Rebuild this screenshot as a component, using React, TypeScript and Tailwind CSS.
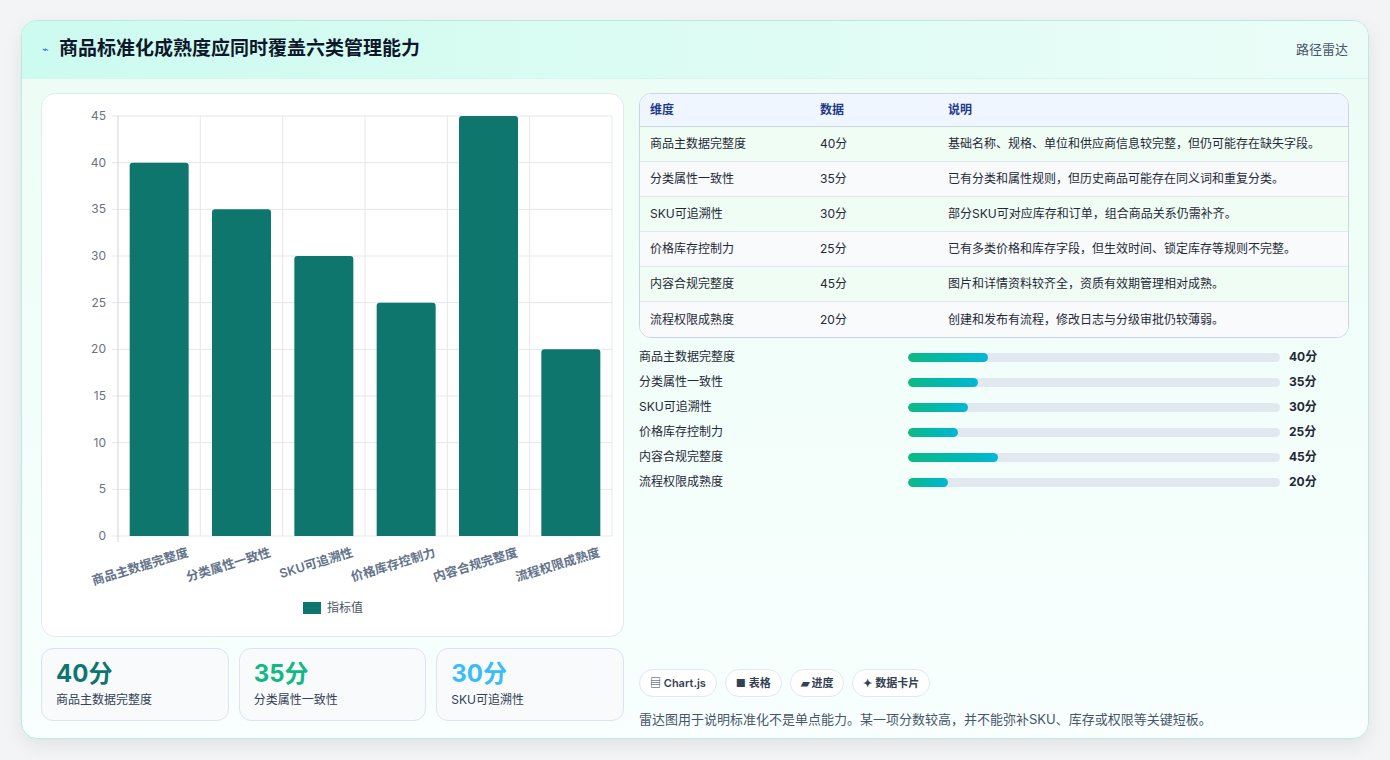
import React from "react";

const data = [
  { n: "商品主数据完整度", v: 40, d: "基础名称、规格、单位和供应商信息较完整，但仍可能存在缺失字段。" },
  { n: "分类属性一致性", v: 35, d: "已有分类和属性规则，但历史商品可能存在同义词和重复分类。" },
  { n: "SKU可追溯性", v: 30, d: "部分SKU可对应库存和订单，组合商品关系仍需补齐。" },
  { n: "价格库存控制力", v: 25, d: "已有多类价格和库存字段，但生效时间、锁定库存等规则不完整。" },
  { n: "内容合规完整度", v: 45, d: "图片和详情资料较齐全，资质有效期管理相对成熟。" },
  { n: "流程权限成熟度", v: 20, d: "创建和发布有流程，修改日志与分级审批仍较薄弱。" },
];

function Chart() {
  const x0 = 76, x1 = 570, y0 = 22, y1 = 442;
  const cw = (x1 - x0) / 6;
  const ys = [0, 5, 10, 15, 20, 25, 30, 35, 40, 45];
  const yp = (v: number) => y1 - (v / 45) * (y1 - y0);
  return (
    <svg width="582" height="543" className="block">
      {ys.map((v) => (
        <g key={v}>
          <line x1={x0 - 6} x2={x1} y1={yp(v)} y2={yp(v)} stroke="#e5e7eb" />
          <text x={x0 - 12} y={yp(v) + 4} textAnchor="end" fontSize="12" fill="#6b7280">{v}</text>
        </g>
      ))}
      {data.map((_, i) => (
        <line key={i} x1={x0 + cw * (i + 1)} x2={x0 + cw * (i + 1)} y1={y0} y2={y1} stroke="#e5e7eb" />
      ))}
      <line x1={x0} x2={x0} y1={y0} y2={y1 + 6} stroke="#d1d5db" />
      {data.map((d, i) => {
        const cx = x0 + cw * i + cw / 2;
        return (
          <g key={d.n}>
            <path d={`M${cx - 29.5} ${y1} V${yp(d.v) + 3} q0 -3 3 -3 H${cx + 26.5} q3 0 3 3 V${y1} Z`} fill="#0f766e" />
            <text x={cx + 30} y={y1 + 20} textAnchor="end" fontSize="12.5" fontWeight="600" fill="#64748b" transform={`rotate(-17 ${cx + 30} ${y1 + 20})`}>{d.n}</text>
          </g>
        );
      })}
      <rect x="261" y="508" width="18" height="12" fill="#0f766e" />
      <text x="285" y="518" fontSize="12" fill="#4b5563">指标值</text>
    </svg>
  );
}

export default function App() {
  return (
    <div className="w-[1390px] h-[760px] bg-[#f3f4f6] p-[20px] pl-[21px]" style={{ fontFamily: "Inter, 'Noto Sans CJK SC', sans-serif" }}>
      <div className="w-[1348px] h-[719px] rounded-[16px] border border-[#b8ece2] bg-gradient-to-b from-[#ecfdf5] to-[#f8fffe] shadow-[0_6px_18px_rgba(0,0,0,0.08)] overflow-hidden flex flex-col">
        <div className="h-[58px] flex items-center justify-between px-[20px] bg-gradient-to-r from-[#ccfbef] to-[#ecfdf8] border-b border-[#d6f5ec]">
          <div className="flex items-center gap-[10px]">
            <span className="text-[#2563eb] text-[11px]">⌁</span>
            <span className="text-[19px] font-bold text-[#0f172a]">商品标准化成熟度应同时覆盖六类管理能力</span>
          </div>
          <span className="text-[13px] text-[#475569]">路径雷达</span>
        </div>
        <div className="flex gap-[15px] px-[19px] pt-[14px]">
          <div className="w-[583px] flex flex-col gap-[11px]">
            <div className="h-[544px] rounded-[14px] border border-[#e2e8f0] bg-white overflow-hidden">
              <Chart />
            </div>
            <div className="flex gap-[10px]">
              {[["40分", "text-[#0f766e]"], ["35分", "text-[#10b981]"], ["30分", "text-[#38bdf8]"]].map(([v, c], i) => (
                <div key={v} className="w-[188px] h-[73px] rounded-[12px] border border-[#dbe4f0] bg-[#f8fafc] px-[14px] pt-[10px]">
                  <div className={`text-[24px] font-bold leading-[30px] ${c}`}>{v}</div>
                  <div className="text-[12px] text-[#334155] mt-[2px]">{data[i].n}</div>
                </div>
              ))}
            </div>
          </div>
          <div className="flex-1 flex flex-col">
            <div className="rounded-[12px] border border-[#cbd5e1] overflow-hidden bg-white">
              <div className="h-[33px] flex items-center bg-[#eff6ff] border-b border-[#cbd5e1] text-[12px] font-semibold text-[#1e3a8a] px-[10px]">
                <div className="w-[170px]">维度</div><div className="w-[128px]">数据</div><div>说明</div>
              </div>
              {data.map((d, i) => (
                <div key={d.n} className={`h-[35px] flex items-center px-[10px] text-[12px] text-[#1f2937] ${i % 2 === 0 ? "bg-[#f0fdf4]" : "bg-[#f8fafc]"} ${i < 5 ? "border-b border-[#e2e8f0]" : ""}`}>
                  <div className="w-[170px]">{d.n}</div><div className="w-[128px]">{d.v}分</div><div>{d.d}</div>
                </div>
              ))}
            </div>
            <div className="flex flex-col gap-[11px] mt-[12px]">
              {data.map((d) => (
                <div key={d.n} className="h-[14px] flex items-center text-[12px]">
                  <div className="w-[269px] text-[#1f2937]">{d.n}</div>
                  <div className="w-[372px] h-[9px] rounded-full bg-[#e2e8f0] overflow-hidden">
                    <div className="h-full rounded-full bg-gradient-to-r from-[#10b981] to-[#06b6d4]" style={{ width: `${(d.v / 185) * 100}%` }} />
                  </div>
                  <div className="ml-[9px] font-bold text-[#1f2937]">{d.v}分</div>
                </div>
              ))}
            </div>
            <div className="flex gap-[8px] mt-[180px]">
              {["▤ Chart.js", "■ 表格", "▰ 进度", "✦ 数据卡片"].map((t) => (
                <span key={t} className="h-[28px] px-[10px] flex items-center rounded-full border border-[#e2e8f0] bg-white text-[11px] font-semibold text-[#334155]">{t}</span>
              ))}
            </div>
            <div className="mt-[13px] text-[13px] text-[#475569]">雷达图用于说明标准化不是单点能力。某一项分数较高，并不能弥补SKU、库存或权限等关键短板。</div>
          </div>
        </div>
      </div>
    </div>
  );
}
